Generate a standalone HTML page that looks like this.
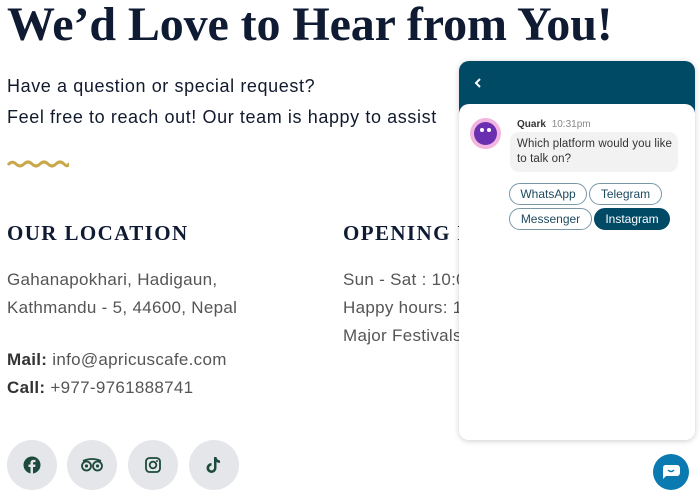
<!DOCTYPE html>
<html><head><style>
*{margin:0;padding:0;box-sizing:border-box}
body{width:700px;height:497px;overflow:hidden;background:#fff;font-family:"Liberation Sans",sans-serif;position:relative;color:#3a3a3a}
.h1{position:absolute;left:7px;top:-3px;font-family:"Liberation Serif",serif;font-weight:bold;font-size:48px;color:#0f1a33;white-space:nowrap;letter-spacing:-0.1px}
.p{position:absolute;left:7px;font-size:18px;color:#111a2e;white-space:nowrap;letter-spacing:0.6px}
.h3{position:absolute;top:221px;font-family:"Liberation Serif",serif;font-weight:bold;font-size:21px;letter-spacing:1.4px;color:#0f1a33;white-space:nowrap}
.t{position:absolute;font-size:17px;color:#555;white-space:nowrap;letter-spacing:0.3px}
.t b{color:#333}
.soc{position:absolute;top:440px;width:50px;height:50px;border-radius:50%;background:#e4e6ea;display:flex;align-items:center;justify-content:center}
.chat{position:absolute;left:459px;top:61px;width:236px;height:379px;border-radius:10px;background:#fff;box-shadow:0 1px 6px rgba(0,0,0,.2);overflow:hidden}
.hd{height:52px;background:#004a66;position:relative}
.body{position:absolute;top:43px;left:0;right:0;bottom:0;background:#fff;border-radius:10px 10px 0 0}
.btn{position:absolute;height:22px;border:1px solid #7a98a8;border-radius:11px;font-size:12px;color:#1e4a5f;display:flex;align-items:center;justify-content:center}
</style></head><body>
<div class="h1">We’d Love to Hear from You!</div>
<div class="p" style="top:76px">Have a question or special request?</div>
<div class="p" style="top:107px">Feel free to reach out! Our team is happy to assist</div>
<svg style="position:absolute;left:7px;top:158px" width="62" height="12"><path d="M1 7 Q5 2 9 6 T17 6 T25 6 T33 6 T41 6 T49 6 T57 6 T62 5" fill="none" stroke="#c9a84a" stroke-width="3"/></svg>
<div class="h3" style="left:7px">OUR LOCATION</div>
<div class="h3" style="left:343px">OPENING HOURS</div>
<div class="t" style="left:7px;top:270px">Gahanapokhari, Hadigaun,</div>
<div class="t" style="left:7px;top:298px">Kathmandu - 5, 44600, Nepal</div>
<div class="t" style="left:7px;top:350px"><b>Mail:</b> info@apricuscafe.com</div>
<div class="t" style="left:7px;top:378px"><b>Call:</b> +977-9761888741</div>
<div class="t" style="left:343px;top:270px">Sun - Sat : 10:00</div>
<div class="t" style="left:343px;top:298px">Happy hours: 16</div>
<div class="t" style="left:343px;top:326px">Major Festivals</div>
<div class="soc" style="left:7px"><svg width="18" height="18" viewBox="0 0 18 18"><circle cx="9" cy="9" r="8.5" fill="#1d4a3a"/><path d="M10 18V11h2.2l.3-2.5H10V7.2c0-.7.3-1.1 1.2-1.1h1.3V4c-.4-.1-1.2-.1-2-.1-1.9 0-3 1.1-3 3v1.6H5.5V11h2V18z" fill="#e4e6ea"/></svg></div>
<div class="soc" style="left:67px"><svg width="24" height="16" viewBox="0 0 24 16"><g fill="none" stroke="#1d4a3a" stroke-width="1.8"><circle cx="6.5" cy="9" r="4.5"/><circle cx="17.5" cy="9" r="4.5"/><path d="M3 4 Q12 0 21 4"/></g><circle cx="6.5" cy="9" r="1.6" fill="#1d4a3a"/><circle cx="17.5" cy="9" r="1.6" fill="#1d4a3a"/></svg></div>
<div class="soc" style="left:128px"><svg width="16" height="16" viewBox="0 0 16 16"><g fill="none" stroke="#1d4a3a" stroke-width="1.8"><rect x="1" y="1" width="14" height="14" rx="3.5"/><circle cx="8" cy="8" r="3.3"/></g><circle cx="12" cy="4" r="1" fill="#1d4a3a"/></svg></div>
<div class="soc" style="left:189px"><svg width="16" height="18" viewBox="0 0 16 18"><path d="M8 1h2.5c.2 2 1.5 3.3 3.5 3.5V7c-1.3 0-2.5-.4-3.5-1.1V12a5 5 0 1 1-5-5v2.6A2.4 2.4 0 1 0 8 12z" fill="#1d4a3a"/></svg></div>
<div class="chat">
<div class="hd"><svg style="position:absolute;left:15px;top:17px" width="8" height="10"><path d="M6 1L2 5l4 4" fill="none" stroke="#fff" stroke-width="2"/></svg></div>
<div class="body">
<div style="position:absolute;left:11px;top:14px;width:31px;height:31px;border-radius:50%;background:#f2b5df"></div>
<div style="position:absolute;left:15px;top:18px;width:23px;height:23px;border-radius:50%;background:#6a2fb0"></div>
<div style="position:absolute;left:21px;top:24px;width:4px;height:4px;border-radius:50%;background:#fff"></div>
<div style="position:absolute;left:28px;top:24px;width:4px;height:4px;border-radius:50%;background:#fff"></div>
<div style="position:absolute;left:58px;top:15px;font-size:10px;color:#333"><b>Quark</b> <span style="color:#888;margin-left:3px">10:31pm</span></div>
<div style="position:absolute;left:51px;top:28px;width:168px;height:40px;background:#f2f2f3;border-radius:9px;font-size:11.5px;color:#333;padding:5px 7px;line-height:15px;letter-spacing:0.1px;white-space:nowrap">Which platform would you like<br>to talk on?</div>
<div class="btn" style="left:50px;top:79px;width:78px">WhatsApp</div>
<div class="btn" style="left:130px;top:79px;width:73px">Telegram</div>
<div class="btn" style="left:50px;top:104px;width:83px">Messenger</div>
<div class="btn" style="left:135px;top:104px;width:76px;background:#004a66;color:#fff;border-color:#004a66">Instagram</div>
</div></div>
<div style="position:absolute;left:653px;top:454px;width:36px;height:36px;border-radius:50%;background:#0a7ab0"><svg style="position:absolute;left:8px;top:10px" width="20" height="16" viewBox="0 0 20 16"><path d="M4 1h12a3 3 0 0 1 3 3v5a3 3 0 0 1-3 3H5l-3 3V4a3 3 0 0 1 2-3z" fill="#fff"/><path d="M7 6q3 3 6 0" fill="none" stroke="#0a7ab0" stroke-width="1.5"/></svg></div>
</body></html>
